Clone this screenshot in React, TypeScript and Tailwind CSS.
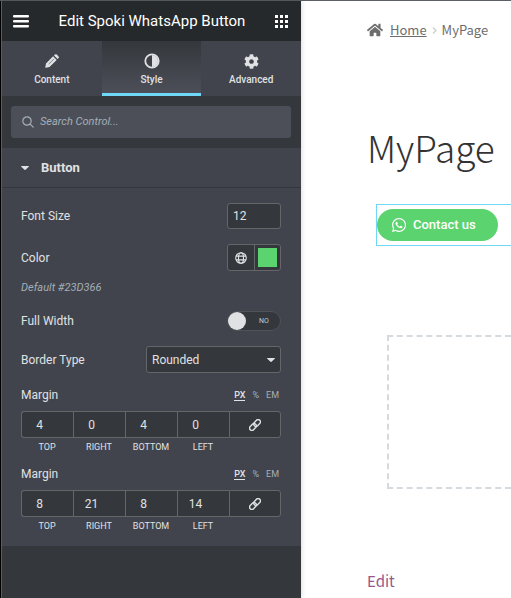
import type { ReactNode } from "react";
import { FaCog, FaHome, FaWhatsapp } from "react-icons/fa";

const field = "rounded-[3px] border border-[#64666a] bg-[#34383c] text-[#e0e1e3]";

function MenuIcon() {
  return (
    <svg className="h-4 w-4" viewBox="0 0 16 16" fill="currentColor" aria-hidden="true">
      <rect y="2" width="16" height="2.4" rx="1" />
      <rect y="7" width="16" height="2.4" rx="1" />
      <rect y="12" width="16" height="2.4" rx="1" />
    </svg>
  );
}

function GridIcon() {
  return (
    <svg className="h-[13px] w-[13px]" viewBox="0 0 13 13" fill="currentColor" aria-hidden="true">
      {[0, 5, 10].map((y) => [0, 5, 10].map((x) => <rect key={`${x}-${y}`} x={x} y={y} width="3" height="3" />))}
    </svg>
  );
}

function PencilIcon() {
  return (
    <svg className="h-[14px] w-[14px]" viewBox="0 0 14 14" fill="currentColor" aria-hidden="true">
      <path d="M.3 13.2 1 9.6 8.1 2.3l3.6 3.6-7.2 7.2-3.6.7q-.7.1-.6-.6z" />
      <path d="M9 1.4 9.8.6q1-.9 2 0l1.600 1.600q.9 1 0 2l-.8.8z" />
      <path d="M3.600 10.300 9 4.900" stroke="#6b6e75" strokeWidth=".8" />
    </svg>
  );
}

function ContrastIcon() {
  return (
    <svg className="h-4 w-4" viewBox="0 0 16 16" aria-hidden="true">
      <circle cx="8" cy="8" r="6.7" fill="none" stroke="currentColor" strokeWidth="1.8" />
      <path d="M8 2a6 6 0 0 1 0 12z" fill="currentColor" />
    </svg>
  );
}

function SearchIcon() {
  return (
    <svg className="h-3 w-3 shrink-0 text-[#a4afb7]" viewBox="0 0 12 12" fill="none" stroke="currentColor" strokeWidth="1.2" strokeLinecap="round" aria-hidden="true">
      <circle cx="5" cy="5" r="4.2" />
      <path d="M8.2 8.2 11.2 11.2" />
    </svg>
  );
}

function GlobeIcon() {
  return (
    <svg className="h-3 w-3" viewBox="0 0 12 12" fill="none" stroke="currentColor" strokeWidth="1.1" aria-hidden="true">
      <circle cx="6" cy="6" r="5.3" />
      <ellipse cx="6" cy="6" rx="2.5" ry="5.3" />
      <path d="M1 4.1h10M1 7.9h10" />
    </svg>
  );
}

function LinkIcon() {
  return (
    <svg className="h-3 w-3" viewBox="0 0 12 12" fill="none" stroke="currentColor" strokeWidth="1.4" aria-hidden="true">
      <g transform="rotate(-45 6 6)">
        <rect x="-.7" y="3.7" width="7.6" height="4.6" rx="2.3" />
        <rect x="5.1" y="3.700" width="7.6" height="4.6" rx="2.3" />
      </g>
    </svg>
  );
}

function Caret({ className = "" }: { className?: string }) {
  return (
    <svg className={`h-1 w-2 ${className}`} viewBox="0 0 8 4" fill="currentColor" aria-hidden="true">
      <path d="M.5 0h7q.7.1.2.7L4.5 3.8q-.5.4-1 0L.3.7Q-.2.1.5 0z" />
    </svg>
  );
}

function Tab({ icon, label, active }: { icon: ReactNode; label: string; active?: boolean }) {
  return (
    <button
      role="tab"
      aria-selected={!!active}
      className={`flex h-[55px] flex-1 flex-col items-center gap-[3px] border-b-3 pt-3 text-[10px] leading-4 font-medium text-[#e0e1e3] ${
        active ? "border-[#71d7f7] bg-linear-to-b from-[#34383c] to-[#4c4f58]" : "border-[#41444c] bg-[#41444c]"
      }`}
    >
      <span className="flex h-4 items-center">{icon}</span>
      {label}
    </button>
  );
}

function Dimensions({ id, values }: { id: string; values: number[] }) {
  const sides = ["TOP", "RIGHT", "BOTTOM", "LEFT"];
  return (
    <fieldset className="flex flex-col">
      <legend className="contents">
        <span className="flex h-4 items-center justify-between">
          <span>Margin</span>
          <span className="flex gap-[7px] pr-[2px] text-[9px] leading-3 text-[#a4afb7]">
            <button className="border-b border-[#e0e1e3] leading-[10px] font-medium text-[#e0e1e3]">PX</button>
            <button>%</button>
            <button>EM</button>
          </span>
        </span>
      </legend>
      <div className="mt-2 grid grid-cols-5">
        {sides.map((side, i) => (
          <div key={side} className="flex flex-col items-center">
            <input
              id={`${id}-${side}`}
              inputMode="numeric"
              defaultValue={values[i]}
              className={`h-[27px] w-full border-y border-l border-[#64666a] bg-[#34383c] pr-4 text-center text-[12px] text-[#e0e1e3] ${
                i === 0 ? "rounded-l-[3px]" : ""
              }`}
            />
            <label htmlFor={`${id}-${side}`} className="mt-1 text-[9px] leading-[10px]">
              {side}
            </label>
          </div>
        ))}
        <button aria-label="Link values" className="flex h-[27px] items-center justify-center rounded-r-[3px] border border-[#64666a] bg-[#34383c]">
          <LinkIcon />
        </button>
      </div>
    </fieldset>
  );
}

function Panel() {
  return (
    <aside className="z-10 flex w-[301px] shrink-0 flex-col border-l border-black bg-[#34383c] font-[Roboto,sans-serif] text-[#e0e1e3] shadow-[0_0_5px_rgba(0,0,0,0.2)]">
      <div className="flex flex-1 flex-col border-l border-[#5d5d60]">
        <header className="flex h-10 items-center justify-between bg-[#26292c] pr-[13px] pl-[11px] text-white">
          <button aria-label="Menu"><MenuIcon /></button>
          <h1 className="text-[15px]">Edit Spoki WhatsApp Button</h1>
          <button aria-label="Widgets"><GridIcon /></button>
        </header>
        <div role="tablist" className="flex">
          <Tab icon={<PencilIcon />} label="Content" />
          <Tab icon={<ContrastIcon />} label="Style" active />
          <Tab icon={<FaCog className="h-[15px] w-[15px]" />} label="Advanced" />
        </div>
        <div className="py-[10px] pr-[10px] pl-[9px]">
          <label className="flex h-8 items-center gap-[6px] rounded-[3px] bg-[#4c4f58] pl-[11px]">
            <SearchIcon />
            <input
              type="search"
              aria-label="Search Control"
              placeholder="Search Control..."
              className="min-w-0 flex-1 bg-transparent text-[11px] italic placeholder:text-[#a4afb7]"
            />
          </label>
        </div>
        <section className="bg-[#41444c] text-[12px] leading-4">
          <button className="flex h-10 w-full items-center gap-3 border-b border-[#34383c] pl-[19px] text-[13px] font-bold">
            <Caret />
            Button
          </button>
          <div className="flex flex-col pt-[15px] pr-5 pb-[15px] pl-[19px]">
            <div className="flex items-center justify-between">
              <label htmlFor="font-size">Font Size</label>
              <input id="font-size" inputMode="numeric" defaultValue="12" className={`h-[26px] w-[54px] px-[5px] text-[12px] ${field}`} />
            </div>
            <div className="mt-[15px] flex items-center justify-between">
              <span>Color</span>
              <div className={`flex h-[27px] w-[54px] ${field}`}>
                <button aria-label="Global color" className="flex flex-1 items-center justify-center border-r border-[#64666a]">
                  <GlobeIcon />
                </button>
                <button aria-label="Pick color" className="flex w-[25px] items-center justify-center">
                  <span className="h-[19px] w-[19px] bg-[#5bd36e]" />
                </button>
              </div>
            </div>
            <p className="mt-[9px] text-[11px] text-[#a4afb7] italic">Default #23D366</p>
            <div className="mt-[15px] flex items-center justify-between">
              <label htmlFor="full-width">Full Width</label>
              <label className="flex h-5 w-[54px] items-center rounded-full border border-[#505257] bg-[#34383c] text-[7px] leading-none text-[#c2cbd2]">
                <input id="full-width" type="checkbox" className="h-[18px] w-[18px] appearance-none rounded-full bg-[#e0e1e3]" />
                <span className="flex-1 pl-[2px] text-center">NO</span>
              </label>
            </div>
            <div className="mt-[15px] flex items-center justify-between">
              <label htmlFor="border-type">Border Type</label>
              <div className="grid w-[135px] items-center">
                <select id="border-type" className={`col-start-1 row-start-1 h-[27px] appearance-none pr-5 pl-[5px] text-[12px] ${field}`}>
                  <option>Rounded</option>
                  <option>Square</option>
                </select>
                <Caret className="pointer-events-none col-start-1 row-start-1 mr-[6px] justify-self-end" />
              </div>
            </div>
            <div className="mt-[14px] flex flex-col gap-[14px]">
              <Dimensions id="margin" values={[4, 0, 4, 0]} />
              <Dimensions id="inner" values={[8, 21, 8, 14]} />
            </div>
          </div>
        </section>
      </div>
    </aside>
  );
}

function Preview() {
  return (
    <main className="min-w-0 flex-1 overflow-hidden pl-[66px] font-['Noto_Sans_CJK_SC',sans-serif] text-[#6d6d6d]">
      <nav aria-label="Breadcrumb" className="flex items-center pt-[19px] text-[13px] leading-5">
        <FaHome className="mr-[7px] h-4 w-4" />
        <a href="#home" className="underline">Home</a>
        <svg className="mx-[5px] h-[7px] w-[5px] text-[#d0d0d0]" viewBox="0 0 5 7" fill="none" stroke="currentColor" strokeWidth="1.4" aria-hidden="true">
          <path d="M1 .5 4 3.5 1 6.5" />
        </svg>
        <span>MyPage</span>
      </nav>
      <h2 className="pt-[77px] text-[37px] leading-[60px] font-light text-[#333333]">MyPage</h2>
      <div className="mt-[27px] ml-[9px] h-[42px] border border-r-0 border-[#71d7f7] py-1">
        <a href="#contact" className="flex h-8 w-[121px] items-center gap-[6px] rounded-full bg-[#5bd36e] pl-[14px] font-[Roboto,sans-serif] text-[13px] font-medium whitespace-nowrap text-white">
          <FaWhatsapp className="h-4 w-4" />
          Contact us
        </a>
      </div>
      <div className="mt-[89px] ml-5 h-[154px] border-2 border-r-0 border-dashed border-[#d5dadf]" />
      <a href="#edit" className="mt-20 block text-[15px] leading-6 text-[#96588a]">Edit</a>
    </main>
  );
}

export default function App() {
  return (
    <div className="flex min-h-screen border-t border-[#5d5f66] bg-white">
      <Panel />
      <Preview />
    </div>
  );
}
